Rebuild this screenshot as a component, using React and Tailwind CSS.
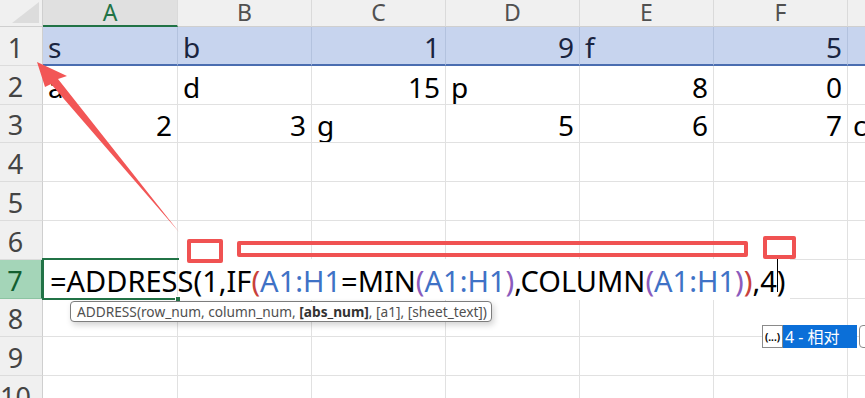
import React from 'react';

const COLS = [
  { key: 'A', w: 'w-[135px]' },
  { key: 'B', w: 'w-[134px]' },
  { key: 'C', w: 'w-[134px]' },
  { key: 'D', w: 'w-[134px]' },
  { key: 'E', w: 'w-[134px]' },
  { key: 'F', w: 'w-[134px]' },
  { key: 'G', w: 'w-[60px]' },
];

// [text, align] per column, rows 1..10
const DATA = {
  1: [['s', 'l'], ['b', 'l'], ['1', 'r'], ['9', 'r'], ['f', 'l'], ['5', 'r'], null],
  2: [['a', 'l'], ['d', 'l'], ['15', 'r'], ['p', 'l'], ['8', 'r'], ['0', 'r'], null],
  3: [['2', 'r'], ['3', 'r'], ['g', 'l'], ['5', 'r'], ['6', 'r'], ['7', 'r'], ['c', 'l']],
};

const ROWS = [1, 2, 3, 4, 5, 6, 7, 8, 9, 10];

function HeaderRow() {
  return (
    <div className="flex h-[27px]">
      <div className="relative w-[43px] shrink-0 bg-[#f0f0f0] border-r border-b border-[#cfcfcf]">
        <svg className="absolute left-0 top-0" width="43" height="27" viewBox="0 0 43 27">
          <polygon points="39,2 39,23 12,23" fill="#dcdcdc" />
        </svg>
      </div>
      {COLS.map((c) => {
        const active = c.key === 'A';
        return (
          <div
            key={c.key}
            className={`${c.w} shrink-0 flex items-start justify-center leading-[25px] text-[23px] border-r border-[#dadada] ${
              active
                ? 'bg-[#e0e0e0] text-[#217346] border-b-2 border-b-[#217346]'
                : 'bg-[#f0f0f0] text-[#505050] border-b border-b-[#cfcfcf]'
            }`}
          >
            {c.key}
          </div>
        );
      })}
    </div>
  );
}

function Row({ n }) {
  const cells = DATA[n] || [];
  const hl = n === 1;
  const active = n === 7;
  return (
    <div className="flex h-[38.8px]">
      <div
        className={`w-[43px] shrink-0 flex items-end justify-center pr-[11px] pb-[4px] leading-none text-[27px] border-b ${
          active
            ? 'bg-[#a4d5b8] text-[#135e30] border-r-2 border-r-[#217346] border-b-[#8cc4a2]'
            : 'bg-[#f0f0f0] text-[#444] border-r border-r-[#cfcfcf] border-b-[#dcdcdc]'
        }`}
      >
        {n}
      </div>
      {COLS.map((c, i) => {
        const cell = cells[i];
        return (
          <div
            key={c.key}
            className={`${c.w} shrink-0 flex items-end px-[5px] pb-[3px] leading-none text-[28px] whitespace-nowrap overflow-hidden ${
              hl
                ? 'bg-[#c7d4ee] text-[#1a2440] border-r border-r-[#b3c2de] border-b-2 border-b-[#4a6db0]'
                : 'bg-white text-black border-r border-b border-[#e1e1e1]'
            } ${cell && cell[1] === 'r' ? 'justify-end' : 'justify-start'}`}
          >
            {cell ? cell[0] : ''}
          </div>
        );
      })}
    </div>
  );
}

function Formula() {
  const blue = 'text-[#3f72c6]';
  const red = 'text-[#c8413b]';
  const purple = 'text-[#8a5bbd]';
  return (
    <div className="absolute left-[50px] top-[266px] leading-none text-[29px] text-black whitespace-nowrap">
      =ADDRESS(1,IF<span className={red}>(</span>
      <span className={blue}>A1:H1</span>=MIN<span className={purple}>(</span>
      <span className={blue}>A1:H1</span>
      <span className={purple}>)</span>,COLUMN<span className={purple}>(</span>
      <span className={blue}>A1:H1</span>
      <span className={purple}>)</span>
      <span className={red}>)</span>,4
      <span className="relative">
        <span className="absolute left-0 top-[-4px] w-px h-[35px] bg-black" />)
      </span>
    </div>
  );
}

export default function App() {
  return (
    <div
      className="relative w-[865px] h-[398px] overflow-hidden bg-white"
      style={{ fontFamily: '"Noto Sans", "Noto Sans CJK SC", sans-serif' }}
    >
      <HeaderRow />
      {ROWS.map((n) => (
        <Row key={n} n={n} />
      ))}

      {/* edit-mode overflow area of A7 */}
      <div className="absolute left-[178px] top-[259px] w-[612px] h-[41px] bg-white" />
      {/* active cell border */}
      <div className="absolute left-[42px] top-[258px] w-[137px] h-[42px] border-l-2 border-t-2 border-b-2 border-[#217346]" />
      <div className="absolute left-[175px] top-[296px] w-[6px] h-[6px] bg-[#217346] border border-white" />

      <Formula />

      {/* function tooltip */}
      <div className="absolute left-[70px] top-[301px] w-[422px] h-[21px] flex items-center pl-[6px] bg-white border border-[#7d7d7d] rounded-[4px] shadow-[2px_3px_6px_rgba(0,0,0,0.18)] text-[13.7px] leading-none text-[#505050] whitespace-nowrap">
        ADDRESS(row_num, column_num,&nbsp;<span className="font-bold text-[#333]">[abs_num]</span>, [a1], [sheet_text])
      </div>

      {/* argument dropdown */}
      <div className="absolute left-[762px] top-[325px] flex h-[23px]">
        <div className="w-[21px] h-full flex items-center justify-center bg-white border border-[#8a8a8a] text-[10px] font-bold text-black leading-none">
          (...)
        </div>
        <div className="w-[74px] h-full flex items-center pl-[2px] bg-[#0b6fd8] text-white text-[16px] leading-none whitespace-nowrap">
          4 - 相对
        </div>
        <div className="ml-[2px] w-[20px] h-full bg-white border border-[#8a8a8a] rounded-l-[4px]" />
      </div>

      {/* annotations */}
      <div className="absolute left-[187px] top-[239px] w-[36px] h-[24px] border-[4px] border-[#f05252] rounded-[2px]" />
      <div className="absolute left-[237px] top-[241px] w-[511px] h-[16px] border-[4px] border-[#f05252] rounded-[2px]" />
      <div className="absolute left-[763px] top-[236px] w-[33px] h-[23px] border-[4px] border-[#f05252] rounded-[2px]" />

      <svg className="absolute left-0 top-0 pointer-events-none" width="865" height="398" viewBox="0 0 865 398">
        <polygon points="37,62 67,76 58,79 179,232 51,84 45,87" fill="#f25656" />
      </svg>
    </div>
  );
}
